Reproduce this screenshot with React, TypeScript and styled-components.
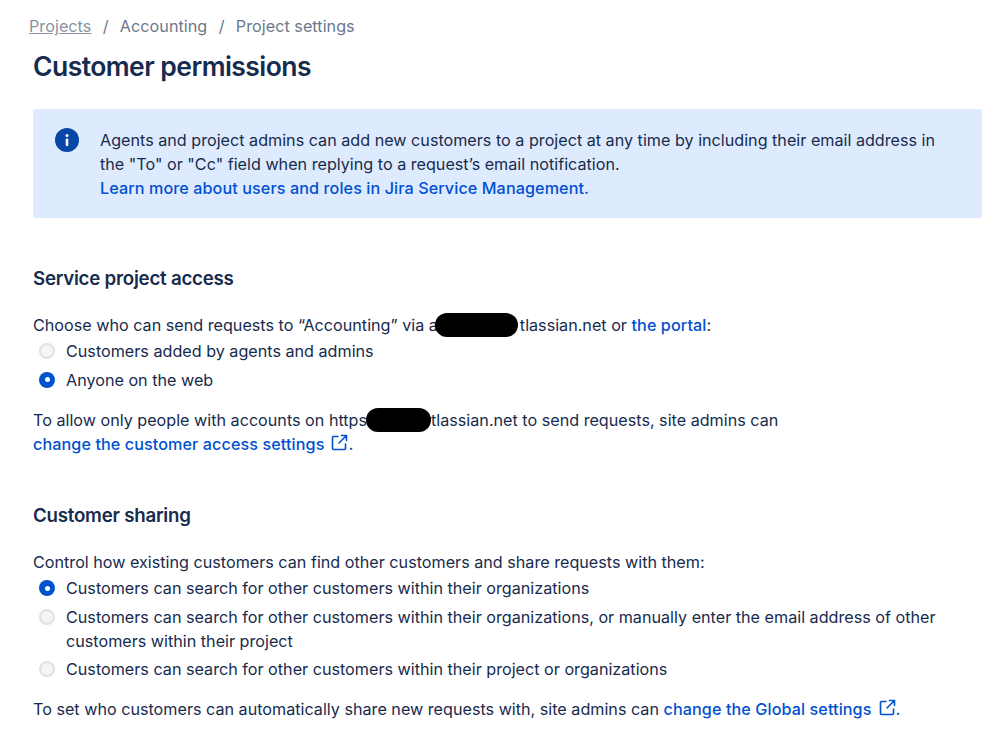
import React from 'react';
import styled, { createGlobalStyle } from 'styled-components';

const GlobalStyle = createGlobalStyle`
  html, body {
    margin: 0;
    background: #fff;
  }
  body {
    font-family: Inter, "Liberation Sans", sans-serif;
    font-size: 16.17px;
    line-height: 24px;
    color: #172b4d;
  }
`;

const Page = styled.div`
  width: 999px;
  height: 749px;
  overflow: hidden;
  box-sizing: border-box;
  padding: 14px 17px 0 33px;
`;

const Breadcrumbs = styled.nav`
  display: flex;
  align-items: center;
  margin-left: -4px;
  height: 24px;
  color: #6b778c;
  letter-spacing: 0.04px;
`;

const Crumb = styled.span<{ $link?: boolean }>`
  text-decoration: ${p => (p.$link ? 'underline' : 'none')};
  color: ${p => (p.$link ? '#8993a4' : '#6b778c')};
`;

const Slash = styled.span`
  width: 28.5px;
  text-align: center;
`;

const Title = styled.h1`
  margin: 10px 0 0;
  font-size: 26.5px;
  line-height: 36px;
  font-weight: 600;
  letter-spacing: -0.55px;
`;

const Banner = styled.div`
  display: flex;
  margin-top: 25px;
  height: 109px;
  box-sizing: border-box;
  padding: 19px 40px 0 22px;
  gap: 21px;
  background: #deebff;
  border-radius: 3px;
`;

const InfoIcon = styled.svg`
  flex: none;
  width: 24px;
  height: 24px;
`;

const Link = styled.a`
  color: #0050d0;
  font-weight: 500;
  letter-spacing: 0.09px;
`;

const Section = styled.section<{ $top: number }>`
  margin-top: ${p => p.$top}px;
`;

const Heading = styled.h2`
  margin: 0 0 20px;
  font-size: 18.7px;
  line-height: 28px;
  font-weight: 600;
  letter-spacing: -0.23px;
`;

const Para = styled.p<{ $top?: number }>`
  margin: ${p => p.$top || 0}px 0 0;
`;

// blacked-out part of the site address, sits over the neighbouring letter
const Redaction = styled.span<{ $width: number; $pull: number }>`
  display: inline-block;
  width: ${p => p.$width}px;
  height: 24px;
  margin: 0 ${p => p.$pull - 1}px 0 -${p => p.$pull}px;
  vertical-align: top;
  border-radius: 12px;
  background: #000;
`;

const RadioRow = styled.label`
  display: flex;
  align-items: flex-start;
  gap: 11px;
  padding: 2px 0 2px 6px;
  margin-top: 0.4px;
`;

const Radio = styled.span<{ $checked?: boolean }>`
  flex: none;
  box-sizing: border-box;
  width: 16px;
  height: 16px;
  margin-top: 4px;
  border-radius: 50%;
  background: ${p => (p.$checked ? '#0052cc' : '#f4f5f7')};
  border: ${p => (p.$checked ? 'none' : '2px solid #dfe1e6')};
  display: flex;
  align-items: center;
  justify-content: center;
  &::after {
    content: '';
    display: ${p => (p.$checked ? 'block' : 'none')};
    width: 5px;
    height: 5px;
    border-radius: 50%;
    background: #fff;
  }
`;

const External = styled.svg`
  width: 17px;
  height: 17px;
  margin-left: 7px;
  vertical-align: -1px;
`;

function ExternalIcon() {
  return (
    <External viewBox="0 0 17 17" fill="none" stroke="currentColor" strokeWidth="1.6" strokeLinecap="round" strokeLinejoin="round">
      <path d="M7 2.5H2.5a1 1 0 0 0-1 1v11a1 1 0 0 0 1 1h11a1 1 0 0 0 1-1V10" />
      <path d="M10.5 1.5h5v5M15.2 1.8L8 9" />
    </External>
  );
}

export default function App() {
  return (
    <>
      <GlobalStyle />
      <Page>
        <Breadcrumbs>
          <Crumb $link>Projects</Crumb>
          <Slash>/</Slash>
          <Crumb>Accounting</Crumb>
          <Slash>/</Slash>
          <Crumb>Project settings</Crumb>
        </Breadcrumbs>
        <Title>Customer permissions</Title>
        <Banner>
          <InfoIcon viewBox="0 0 24 24">
            <circle cx="12" cy="12" r="12" fill="#0747a6" />
            <circle cx="12" cy="7.6" r="1.5" fill="#fff" />
            <rect x="10.7" y="10.5" width="2.6" height="7.5" rx="1" fill="#fff" />
          </InfoIcon>
          <div>
            Agents and project admins can add new customers to a project at any time by including their email address in the "To" or "Cc" field when replying to a request’s email notification.
            <br />
            <Link>Learn more about users and roles in Jira Service Management.</Link>
          </div>
        </Banner>
        <Section $top={47}>
          <Heading>Service project access</Heading>
          <Para>
            Choose who can send requests to “Accounting” via a<Redaction $width={83} $pull={3} />tlassian.net or <Link>the portal</Link>:
          </Para>
          <RadioRow><Radio />Customers added by agents and admins</RadioRow>
          <RadioRow><Radio $checked />Anyone on the web</RadioRow>
          <Para $top={14}>
            To allow only people with accounts on https<Redaction $width={65} $pull={1} />tlassian.net to send requests, site admins can
            <br />
            <Link>change the customer access settings<ExternalIcon />.</Link>
          </Para>
        </Section>
        <Section $top={46}>
          <Heading>Customer sharing</Heading>
          <Para>Control how existing customers can find other customers and share requests with them:</Para>
          <RadioRow><Radio $checked />Customers can search for other customers within their organizations</RadioRow>
          <RadioRow><Radio /><span>Customers can search for other customers within their organizations, or manually enter the email address of other customers within their project</span></RadioRow>
          <RadioRow><Radio />Customers can search for other customers within their project or organizations</RadioRow>
          <Para $top={14}>
            To set who customers can automatically share new requests with, site admins can <Link>change the Global settings<ExternalIcon />.</Link>
          </Para>
        </Section>
      </Page>
    </>
  );
}
